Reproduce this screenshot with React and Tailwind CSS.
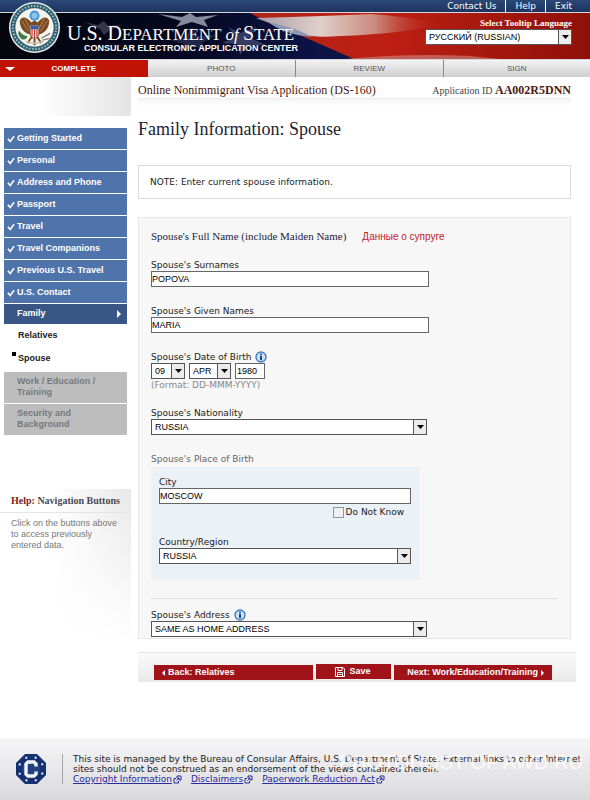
import React, { useState } from 'react';
import clsx from 'clsx';

const STEPS = ['COMPLETE', 'PHOTO', 'REVIEW', 'SIGN'];
const DONE = ['Getting Started', 'Personal', 'Address and Phone', 'Passport', 'Travel', 'Travel Companions', 'Previous U.S. Travel', 'U.S. Contact'];
const LOCKED = ['Work / Education / Training', 'Security and Background'];
const STARS = [0, 45, 90, 135, 180, 225, 270, 315];

const Seal = () => (
  <svg viewBox="0 0 54 54" className="absolute left-2 top-px w-[53px] h-[53px]" aria-label="Department of State seal">
    <circle cx="27" cy="27" r="26" fill="#e9edea" />
    <circle cx="27" cy="27" r="24.5" fill="#2f5f74" />
    <circle cx="27" cy="27" r="22" fill="none" stroke="#a9c0b8" strokeWidth="2" strokeDasharray="1.5 1.7" />
    <circle cx="27" cy="27" r="19.5" fill="#f6f5ef" />
    <circle cx="27" cy="15" r="5.2" fill="#4d9bd6" />
    <circle cx="27" cy="15" r="3" fill="#8cc4ec" />
    <path d="M24 22 C18 15 14 16 12 20 C12 26 15 32 22 34 L24 38 H30 L32 34 C39 32 42 26 42 20 C40 16 36 15 30 22 L28 20 H26Z" fill="#7a4a22" />
    <path d="M14 20 L21 31 M17 18 L23 29 M40 20 L33 31 M37 18 L31 29" stroke="#b98752" strokeWidth="1" />
    <path d="M23 25 H31 V33 Q31 36 27 38 Q23 36 23 33Z" fill="#f2e9e6" />
    <path d="M23 25 H31 V29 H23Z" fill="#3a5fa8" />
    <path d="M24.5 29 V36 M27 29 V38 M29.5 29 V36" stroke="#c33" strokeWidth="1.2" />
    <path d="M24 37 L20 43 M30 37 L34 43 M27 38 V45" stroke="#7a4a22" strokeWidth="2" />
    <path d="M11 30 Q9 35 14 39 Q19 40 20 36 Q15 35 11 30Z" fill="#3f7d4b" />
    <path d="M34 38 L43 33 M35 40 L42 38" stroke="#777" strokeWidth="1.3" />
    <path d="M18 41 Q27 45 36 41" stroke="#c9c2ae" strokeWidth="1.5" fill="none" />
  </svg>
);

const FlagBackdrop = () => (
  <svg viewBox="0 0 590 46" preserveAspectRatio="none" className="absolute inset-0 w-full h-full" aria-hidden="true">
    <defs>
      <linearGradient id="night" x1="0" x2="1" y1="0" y2="0">
        <stop offset="0" stopColor="#03040c" />
        <stop offset="0.3" stopColor="#05071f" />
        <stop offset="0.55" stopColor="#0d1448" />
      </linearGradient>
      <linearGradient id="red" x1="0" x2="1" y1="0" y2="0">
        <stop offset="0" stopColor="#b0241c" />
        <stop offset="0.4" stopColor="#bd1f13" />
        <stop offset="1" stopColor="#8e1008" />
      </linearGradient>
      <linearGradient id="fold" x1="0" x2="1" y1="0" y2="0">
        <stop offset="0" stopColor="#a89aa4" />
        <stop offset="0.35" stopColor="#e0d0cb" />
        <stop offset="0.65" stopColor="#c9897c" />
        <stop offset="1" stopColor="#b81f13" stopOpacity="0" />
      </linearGradient>
    </defs>
    <rect width="590" height="46" fill="url(#night)" />
    <path d="M250 0 H590 V46 H354 Q318 30 290 18 Q268 10 250 0Z" fill="url(#red)" />
    <path d="M256 5 Q330 3 370 1 Q415 4 440 12 Q400 21 340 23 Q315 25 300 21 Q275 12 256 5Z" fill="url(#fold)" />
    <path d="M268 9 Q290 14 300 18 L312 24 Q285 22 268 9Z" fill="#8b97b3" />
    <path d="M345 46 Q410 40 470 43 L500 46Z" fill="#c77b70" opacity="0.7" />
    <path d="M158 1 L182 4 L190 0 L196 4 L218 2 L204 7 L208 14 L192 9 L176 14 L181 8Z" fill="#b2b6c6" opacity="0.75" />
    <path d="M84 9 L98 12 L104 8 L108 13 L122 12 L110 17 L104 22 L100 16Z" fill="#6d7187" opacity="0.45" />
    <path d="M170 27 L186 24 L192 14 L198 23 L216 22 L202 30 L208 38 L194 33 L182 38 L184 31Z" fill="#56608a" opacity="0.35" />
    <path d="M228 14 L240 20 L256 14 L250 25 L266 32 L248 32 L240 42 L238 31 L222 30 L236 24Z" fill="#7884ac" opacity="0.4" />
  </svg>
);

const Check = () => (
  <svg viewBox="0 0 10 10" className="w-2 h-2 shrink-0" aria-hidden="true">
    <path d="M1.2 4.6 L4 8 L8.8 1.5" stroke="white" strokeWidth="2" fill="none" />
  </svg>
);

const HelpIcon = () => (
  <svg viewBox="0 0 12 12" className="w-3 h-3" aria-hidden="true">
    <circle cx="6" cy="6" r="5" fill="#cfe2f6" stroke="#3f7cc4" strokeWidth="1.4" />
    <circle cx="6" cy="3.4" r="1" fill="#164a94" />
    <path d="M6 5 V9.2" stroke="#164a94" strokeWidth="2" />
  </svg>
);

const ExternalIcon = () => (
  <svg viewBox="0 0 9 9" className="inline-block w-[9px] h-[9px] ml-px" aria-hidden="true">
    <path d="M3 3.5 H1 V8 H5.5 V6 M4 1 H8 V5 H6 V3 H4Z M6 3 L3.5 5.5" stroke="#2a2a9c" strokeWidth="1" fill="none" />
  </svg>
);

const BureauSeal = () => (
  <svg viewBox="0 0 32 32" className="w-8 h-8 shrink-0" aria-label="Bureau of Consular Affairs">
    <path d="M10 1 H22 L31 10 V22 L22 31 H10 L1 22 V10Z" fill="#15306f" />
    {STARS.map((a) => (
      <circle key={a} cx="16" cy="3.8" r="1.2" fill="#dfe5f2" transform={`rotate(${a + 22} 16 16)`} />
    ))}
    <circle cx="16" cy="16" r="9" fill="#24427f" />
    <path d="M21 13.5 V11 L19 9 H13 L11 11 V21 L13 23 H19 L21 21 V18.5" stroke="#f1f3f8" strokeWidth="3.4" fill="none" />
  </svg>
);

const Select = ({ id, value, options, className, label }) => {
  const [current, setCurrent] = useState(value);
  return (
    <div className={clsx('relative h-4 max-w-full', className)}>
      <select
        id={id}
        aria-label={label}
        value={current}
        onChange={(e) => setCurrent(e.target.value)}
        className="block w-full h-4 appearance-none bg-white border border-[#555] pl-[3px] pr-[13px] text-[9px] leading-[14px] text-black font-['Liberation_Sans',sans-serif]"
      >
        {(options || [value]).map((o) => <option key={o}>{o}</option>)}
      </select>
      <span className="pointer-events-none absolute right-0 top-0 flex items-center justify-center w-[14px] h-4 border border-[#555] bg-[#ececec]">
        <svg viewBox="0 0 7 4" className="w-[7px] h-1"><path d="M0 0 H7 L3.5 4Z" fill="#000" /></svg>
      </span>
    </div>
  );
};

const TextBox = ({ id, value, className, label }) => (
  <input
    id={id}
    aria-label={label}
    defaultValue={value}
    className={clsx("block h-4 max-w-full bg-white border border-[#666] text-[9px] leading-[14px] text-black font-['Liberation_Sans',sans-serif]", className)}
  />
);

const Label = ({ htmlFor, children, help }) => (
  <div className="flex items-center gap-1 h-3">
    <label htmlFor={htmlFor} className="leading-3">{children}</label>
    {help && <HelpIcon />}
  </div>
);

const Header = () => (
  <header className="relative">
    <nav className="flex justify-end h-3 pr-[18px] bg-linear-to-b from-[#2b4878] to-[#1d355f] text-white text-[9px] leading-3 font-['DejaVu_Sans',sans-serif]">
      <a href="#contact" className="px-[9px]">Contact Us</a>
      <a href="#help" className="px-[9px] border-l border-white">Help</a>
      <a href="#exit" className="pl-[9px] border-l border-white">Exit</a>
    </nav>
    <div className="relative h-12 border-y border-[#d5d5dc] overflow-hidden">
      <FlagBackdrop />
      <div className="relative flex justify-between pl-[67px] pr-[18px]">
        <div className="pt-2 text-white whitespace-nowrap">
          <div className="text-[17px] leading-6 font-['Liberation_Serif',serif]">
            <span className="text-[20px]">U.S. D</span>EPARTMENT <i>of</i> <span className="text-[20px]">S</span>TATE
          </div>
          <div className="pl-[17px] -mt-1 text-[9px] leading-[10px] font-bold font-['Liberation_Sans',sans-serif]">CONSULAR ELECTRONIC APPLICATION CENTER</div>
        </div>
        <div className="flex flex-col items-end pt-1">
          <label htmlFor="tooltip-lang" className="text-[9px] leading-3 font-bold text-white font-['Liberation_Serif',serif]">Select Tooltip Language</label>
          <Select id="tooltip-lang" value="РУССКИЙ (RUSSIAN)" className="w-[147px]" />
        </div>
      </div>
    </div>
    <Seal />
    <nav className="grid grid-cols-4 h-[17px] border-b border-[#b5b5b5] text-center text-[8px] leading-[17px] font-['Liberation_Sans',sans-serif]">
      {STEPS.map((s, i) => (
        <a
          key={s}
          href={`#${s.toLowerCase()}`}
          className={clsx(
            'relative',
            i === 0 ? 'bg-[#c01205] text-white font-bold' : 'bg-linear-to-b from-[#f3f3f3] to-[#cfcfcf] text-[#555]',
            i > 1 && 'border-l border-[#888]'
          )}
        >
          {i === 0 && (
            <svg viewBox="0 0 10 4" className="absolute left-[5px] top-[7px] w-[10px] h-1"><path d="M0 0 H10 L5 4Z" fill="#fff" /></svg>
          )}
          {s}
        </a>
      ))}
    </nav>
  </header>
);

const Sidebar = () => (
  <aside className="w-[131px] shrink-0 font-['Liberation_Sans',sans-serif]">
    <div className="h-[39px] bg-linear-to-r from-white from-30% to-[#e4e4e4]" />
    <nav className="flex flex-col gap-px pt-3 pl-1 pr-1 text-[9px] font-bold">
      {DONE.map((d) => (
        <a key={d} href="#section" className="flex items-center gap-[2px] h-[21px] pl-[3px] bg-[#4f74ab] text-white">
          <Check />
          {d}
        </a>
      ))}
      <a href="#family" className="flex items-center justify-between h-5 pl-[13px] pr-[6px] bg-[#3a5686] text-white">
        Family
        <svg viewBox="0 0 4 8" className="w-1 h-2"><path d="M0 0 L4 4 L0 8Z" fill="#fff" /></svg>
      </a>
      <a href="#relatives" className="pl-[14px] pt-1 leading-3 text-[#222]">Relatives</a>
      <a href="#spouse" className="relative pl-[14px] mt-[10px] mb-[7px] leading-3 text-[#222]">
        <span className="absolute left-2 top-0 w-1 h-1 bg-black" />
        Spouse
      </a>
      {LOCKED.map((l) => (
        <span key={l} className="h-[31px] pl-[13px] pr-7 pt-1 bg-[#bdbdbd] text-[#74797f] leading-[11px]">{l}</span>
      ))}
    </nav>
    <section className="mt-[54px] h-[168px] bg-linear-to-r from-white from-40% to-[#e8e8e8]">
      <div className="h-full bg-linear-to-b from-transparent to-white to-90%">
        <h2 className="h-6 pl-[11px] border-b border-[#e4e4e4] text-[10px] leading-6 font-bold text-[#454a57] whitespace-nowrap font-['Liberation_Serif',serif]">
          <span className="text-[#7a1c12]">Help:</span> Navigation Buttons
        </h2>
        <p className="pl-[11px] pr-3 pt-[5px] text-[9px] leading-[11px] text-[#777]">Click on the buttons above to access previously entered data.</p>
      </div>
    </section>
  </aside>
);

const SpouseForm = () => (
  <fieldset className="mt-[18px] min-w-0 px-3 pt-[11px] pb-px border border-[#e6e6e6] bg-[#f7f7f7] text-[9px] text-[#222]">
    <div className="flex items-baseline gap-4 h-[14px] leading-[14px]">
      <h2 className="text-[11px] text-[#1d2440] font-['Liberation_Serif',serif]">Spouse's Full Name (include Maiden Name)</h2>
      <span lang="ru" className="text-[10px] text-[#c8202a] font-['Liberation_Sans',sans-serif]">Данные о супруге</span>
    </div>
    <div className="mt-4">
      <Label htmlFor="surnames">Spouse's Surnames</Label>
      <TextBox id="surnames" value="POPOVA" className="w-[278px]" />
    </div>
    <div className="mt-[18px]">
      <Label htmlFor="given">Spouse's Given Names</Label>
      <TextBox id="given" value="MARIA" className="w-[278px]" />
    </div>
    <div className="mt-[18px]">
      <Label htmlFor="dob-day" help>Spouse's Date of Birth</Label>
      <div className="flex gap-1">
        <Select id="dob-day" value="09" className="w-[34px]" />
        <Select label="Month" value="APR" options={['JAN', 'FEB', 'MAR', 'APR', 'MAY']} className="w-[42px]" />
        <TextBox label="Year" value="1980" className="w-[30px] pl-px" />
      </div>
      <p className="leading-3 text-[#888]">(Format: DD-MMM-YYYY)</p>
    </div>
    <div className="mt-4">
      <Label htmlFor="nationality">Spouse's Nationality</Label>
      <Select id="nationality" value="RUSSIA" className="w-[276px]" />
    </div>
    <h3 className="mt-[18px] leading-3 text-[#666]">Spouse's Place of Birth</h3>
    <div className="mt-[2px] w-[268px] max-w-full px-2 pt-[9px] pb-4 bg-[#eaf1f7]">
      <Label htmlFor="city">City</Label>
      <TextBox id="city" value="MOSCOW" className="w-full" />
      <label className="flex items-center justify-end gap-[2px] pr-[7px] mt-[2px] h-3 leading-3">
        <input type="checkbox" className="appearance-none w-[11px] h-[11px] border border-[#8a97a5] bg-[#eef1f4]" />
        Do Not Know
      </label>
      <div className="mt-[18px]">
        <Label htmlFor="country">Country/Region</Label>
        <Select id="country" value="RUSSIA" className="w-full" />
      </div>
    </div>
    <div className="mt-[18px] pt-[10px] border-t border-[#e0e0e0]">
      <Label htmlFor="address" help>Spouse's Address</Label>
      <Select id="address" value="SAME AS HOME ADDRESS" className="w-[276px]" />
    </div>
  </fieldset>
);

const Footer = () => (
  <footer className="relative flex items-center mt-14 h-[62px] pl-[15px] bg-linear-to-b from-[#f6f5f7] to-[#dad9dc] text-[9px] leading-[10px] text-[#222] font-['DejaVu_Sans',sans-serif]">
    <BureauSeal />
    <div className="ml-[15px] pl-[10px] border-l border-[#a5a5a5]">
      <p>
        This site is managed by the Bureau of Consular Affairs, U.S. Department of State. External links to other Internet<br />
        sites should not be construed as an endorsement of the views contained therein.
      </p>
      <div className="flex gap-[9px] text-[#2a2a9c]">
        {['Copyright Information', 'Disclaimers', 'Paperwork Reduction Act'].map((t) => (
          <a key={t} href="#info"><span className="underline">{t}</span><ExternalIcon /></a>
        ))}
      </div>
    </div>
    <span className="pointer-events-none absolute right-[7px] top-3 text-[20px] leading-6 text-white/80 whitespace-nowrap font-['Liberation_Sans',sans-serif]">PHOTOHOST OF AWD.RU</span>
  </footer>
);

export default function App() {
  return (
    <div className="bg-white">
      <Header />
      <div className="flex">
        <Sidebar />
        <main className="flex-1 min-w-0 pl-[7px] pr-[14px] font-['DejaVu_Sans',sans-serif]">
          <div className="pr-[5px]">
            <div className="flex justify-between items-baseline h-[22px] pt-[5px] border-b border-[#ececec] text-[12px] leading-4 text-[#4b1810] whitespace-nowrap font-['Liberation_Serif',serif]">
              <span>Online Nonimmigrant Visa Application (DS-160)</span>
              <span className="text-[10px] text-[#444]">Application ID <b className="text-[12px] text-[#4b1810]">AA002R5DNN</b></span>
            </div>
            <div className="h-[7px] bg-linear-to-b from-[#f5f5f5] to-white" />
            <h1 className="mt-[11px] text-[18px] leading-6 text-[#1c2433] font-['Liberation_Serif',serif]">Family Information: Spouse</h1>
            <p className="mt-6 px-[11px] py-[10px] border border-[#dcdcdc] text-[9px] leading-3 text-[#222]">NOTE: Enter current spouse information.</p>
            <SpouseForm />
          </div>
          <div className="flex gap-[3px] items-start mt-[13px] pl-4 pr-6 pt-[11px] pb-[2px] border-t border-[#e6e6e6] bg-linear-to-b from-[#fafafa] to-[#e9e9e9] text-[9px] leading-[15px] font-bold text-white font-['Liberation_Sans',sans-serif]">
            <button className="flex-1 mt-px px-2 bg-[#a01318] text-left flex items-center gap-[3px]">
              <svg viewBox="0 0 3 6" className="w-[3px] h-[6px]"><path d="M3 0 L0 3 L3 6Z" fill="#fff" /></svg>
              Back: Relatives
            </button>
            <button className="w-[75px] bg-[#a01318] flex items-center justify-center gap-1">
              <svg viewBox="0 0 10 10" className="w-[10px] h-[10px]">
                <path d="M0.5 0.5 H8 L9.5 2 V9.5 H0.5Z M3 0.5 V3.5 H7 V0.5 M2.5 9.5 V5.5 H7.5 V9.5 M3.5 7.5 H6.5" stroke="#fff" fill="none" />
              </svg>
              Save
            </button>
            <button className="flex-1 mt-px px-2 bg-[#a01318] flex items-center justify-end gap-[3px] whitespace-nowrap">
              Next: Work/Education/Training
              <svg viewBox="0 0 3 6" className="w-[3px] h-[6px]"><path d="M0 0 L3 3 L0 6Z" fill="#fff" /></svg>
            </button>
          </div>
        </main>
      </div>
      <Footer />
    </div>
  );
}
